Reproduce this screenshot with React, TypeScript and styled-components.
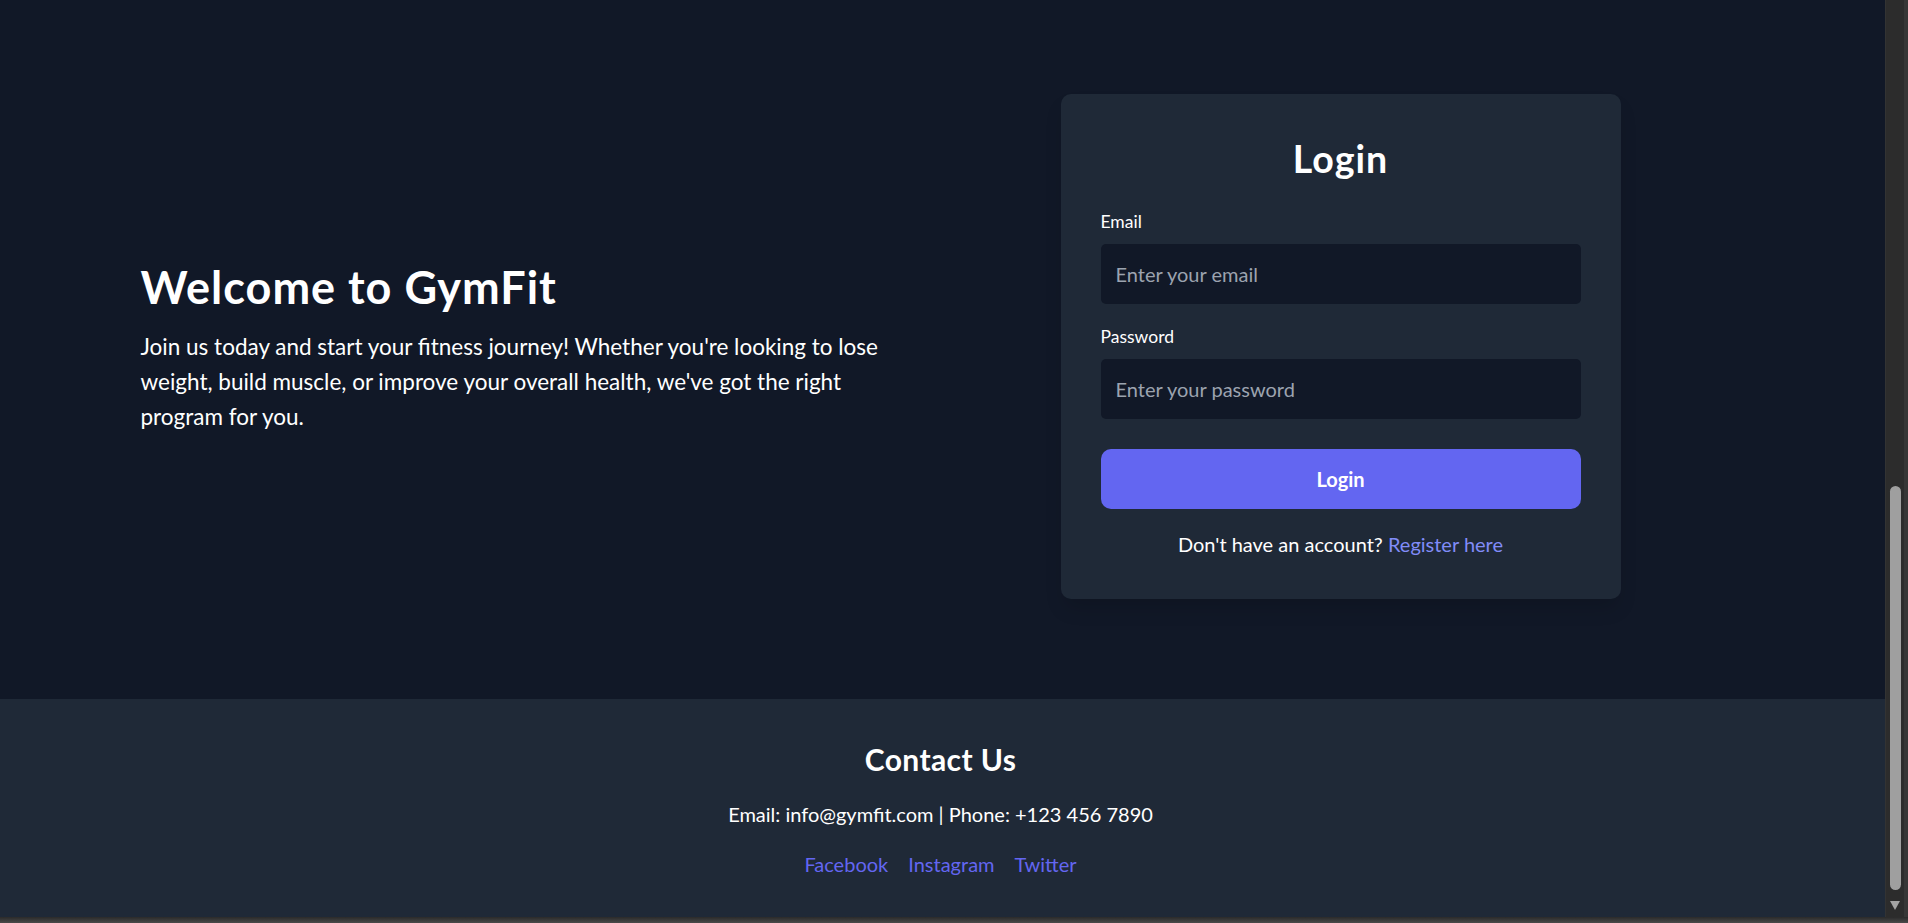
import React from 'react';
import styled, { createGlobalStyle } from 'styled-components';

const GlobalStyle = createGlobalStyle`
  html, body {
    margin: 0;
    padding: 0;
    height: 100%;
    overflow: hidden;
    background: #111827;
  }
  #root { height: 100%; }
  *, *::before, *::after { box-sizing: border-box; }
`;

const FONT = `Lato, "Noto Sans", "Open Sans", sans-serif`;

const Frame = styled.div`
  display: flex;
  flex-direction: column;
  width: 1908px;
  height: 923px;
  background: #3a3a3a;
`;

const Viewport = styled.div`
  display: flex;
  flex: 1;
  min-height: 0;
`;

const Page = styled.div`
  flex: 1;
  display: flex;
  flex-direction: column;
  background: #111827;
  color: #ffffff;
  font-family: ${FONT};
`;

const ScrollTrack = styled.div`
  width: 19px;
  background: #2c2c2c;
  border-left: 1px solid #333;
  display: flex;
  flex-direction: column;
  align-items: center;
  justify-content: flex-end;
  gap: 11px;
  padding-bottom: 7px;
`;

const ScrollThumb = styled.div`
  width: 11px;
  height: 404px;
  border-radius: 6px;
  background: #9f9f9f;
`;

const ScrollArrow = styled.div`
  width: 0;
  height: 0;
  border-left: 5.5px solid transparent;
  border-right: 5.5px solid transparent;
  border-top: 9px solid #a3a3a3;
`;

const FrameEdge = styled.div`
  width: 4px;
  background: #363636;
`;

const FrameBottom = styled.div`
  height: 6px;
  background: linear-gradient(#2a2a2a, #4a4a4a);
`;

const Hero = styled.section`
  padding: 94px 4px 100px 0;
`;

const Container = styled.div`
  width: 1600px;
  margin: 0 auto;
  display: flex;
  align-items: center;
`;

const Intro = styled.div`
  width: 50%;
  padding-right: 40px;
`;

const Title = styled.h1`
  margin: 0 0 17px;
  padding-top: 3px;
  font-size: 45px;
  line-height: 50px;
  font-weight: 700;
  letter-spacing: 1px;
`;

const Lead = styled.p`
  margin: 0;
  font-size: 22.5px;
  line-height: 35px;
`;

const CardCol = styled.div`
  width: 50%;
  display: flex;
  justify-content: center;
`;

const Card = styled.div`
  width: 560px;
  padding: 40px;
  background: #1f2937;
  border-radius: 10px;
  box-shadow: 0 12px 20px -4px rgba(0, 0, 0, 0.15);
`;

const CardTitle = styled.h2`
  margin: 0 0 28px;
  padding-top: 2px;
  text-align: center;
  font-size: 37.5px;
  line-height: 45px;
  font-weight: 700;
  letter-spacing: 1px;
`;

const Field = styled.div<{ $last?: boolean }>`
  margin-bottom: ${(p) => (p.$last ? '30px' : '20px')};
`;

const Label = styled.label`
  display: block;
  margin-bottom: 10px;
  font-size: 17.5px;
  line-height: 25px;
`;

const Input = styled.input`
  display: block;
  width: 100%;
  height: 60px;
  padding: 0 15px;
  border: none;
  border-radius: 5px;
  background: #111827;
  color: #fff;
  font-family: ${FONT};
  font-size: 20px;
  outline: none;
  &::placeholder { color: #9ca3af; }
`;

const SubmitButton = styled.button`
  display: block;
  width: 100%;
  height: 60px;
  border: none;
  border-radius: 10px;
  background: #6366f1;
  color: #fff;
  font-family: ${FONT};
  font-size: 20px;
  font-weight: 700;
  cursor: pointer;
`;

const SwitchText = styled.p`
  margin: 20px 0 0;
  text-align: center;
  font-size: 20px;
  line-height: 30px;
`;

const Link = styled.a<{ $tone?: 'light' | 'base' }>`
  color: ${(p) => (p.$tone === 'light' ? '#818cf8' : '#6366f1')};
  text-decoration: none;
`;

const Footer = styled.footer`
  background: #1f2937;
  padding: 40px 4px 39px 0;
  text-align: center;
`;

const FooterTitle = styled.h2`
  margin: 0 0 20px;
  font-size: 30px;
  line-height: 40px;
  font-weight: 700;
  letter-spacing: 0.4px;
`;

const FooterText = styled.p`
  margin: 0 0 20px;
  font-size: 20px;
  line-height: 30px;
`;

const SocialRow = styled.div`
  display: flex;
  justify-content: center;
  gap: 20px;
  font-size: 20px;
  line-height: 30px;
`;

export default function App() {
  return (
    <>
      <GlobalStyle />
      <Frame>
        <Viewport>
          <Page>
            <Hero>
              <Container>
                <Intro>
                  <Title>Welcome to GymFit</Title>
                  <Lead>
                    Join us today and start your fitness journey! Whether you're looking to lose weight,
                    build muscle, or improve your overall health, we've got the right program for you.
                  </Lead>
                </Intro>
                <CardCol>
                  <Card>
                    <CardTitle>Login</CardTitle>
                    <form onSubmit={(e) => e.preventDefault()}>
                      <Field>
                        <Label htmlFor="email">Email</Label>
                        <Input id="email" type="email" placeholder="Enter your email" />
                      </Field>
                      <Field $last>
                        <Label htmlFor="password">Password</Label>
                        <Input id="password" type="password" placeholder="Enter your password" />
                      </Field>
                      <SubmitButton type="submit">Login</SubmitButton>
                    </form>
                    <SwitchText>
                      Don't have an account? <Link $tone="light" href="#">Register here</Link>
                    </SwitchText>
                  </Card>
                </CardCol>
              </Container>
            </Hero>
            <Footer>
              <FooterTitle>Contact Us</FooterTitle>
              <FooterText>Email: info@gymfit.com | Phone: +123 456 7890</FooterText>
              <SocialRow>
                <Link href="#">Facebook</Link>
                <Link href="#">Instagram</Link>
                <Link href="#">Twitter</Link>
              </SocialRow>
            </Footer>
          </Page>
          <ScrollTrack>
            <ScrollThumb />
            <ScrollArrow />
          </ScrollTrack>
          <FrameEdge />
        </Viewport>
        <FrameBottom />
      </Frame>
    </>
  );
}
